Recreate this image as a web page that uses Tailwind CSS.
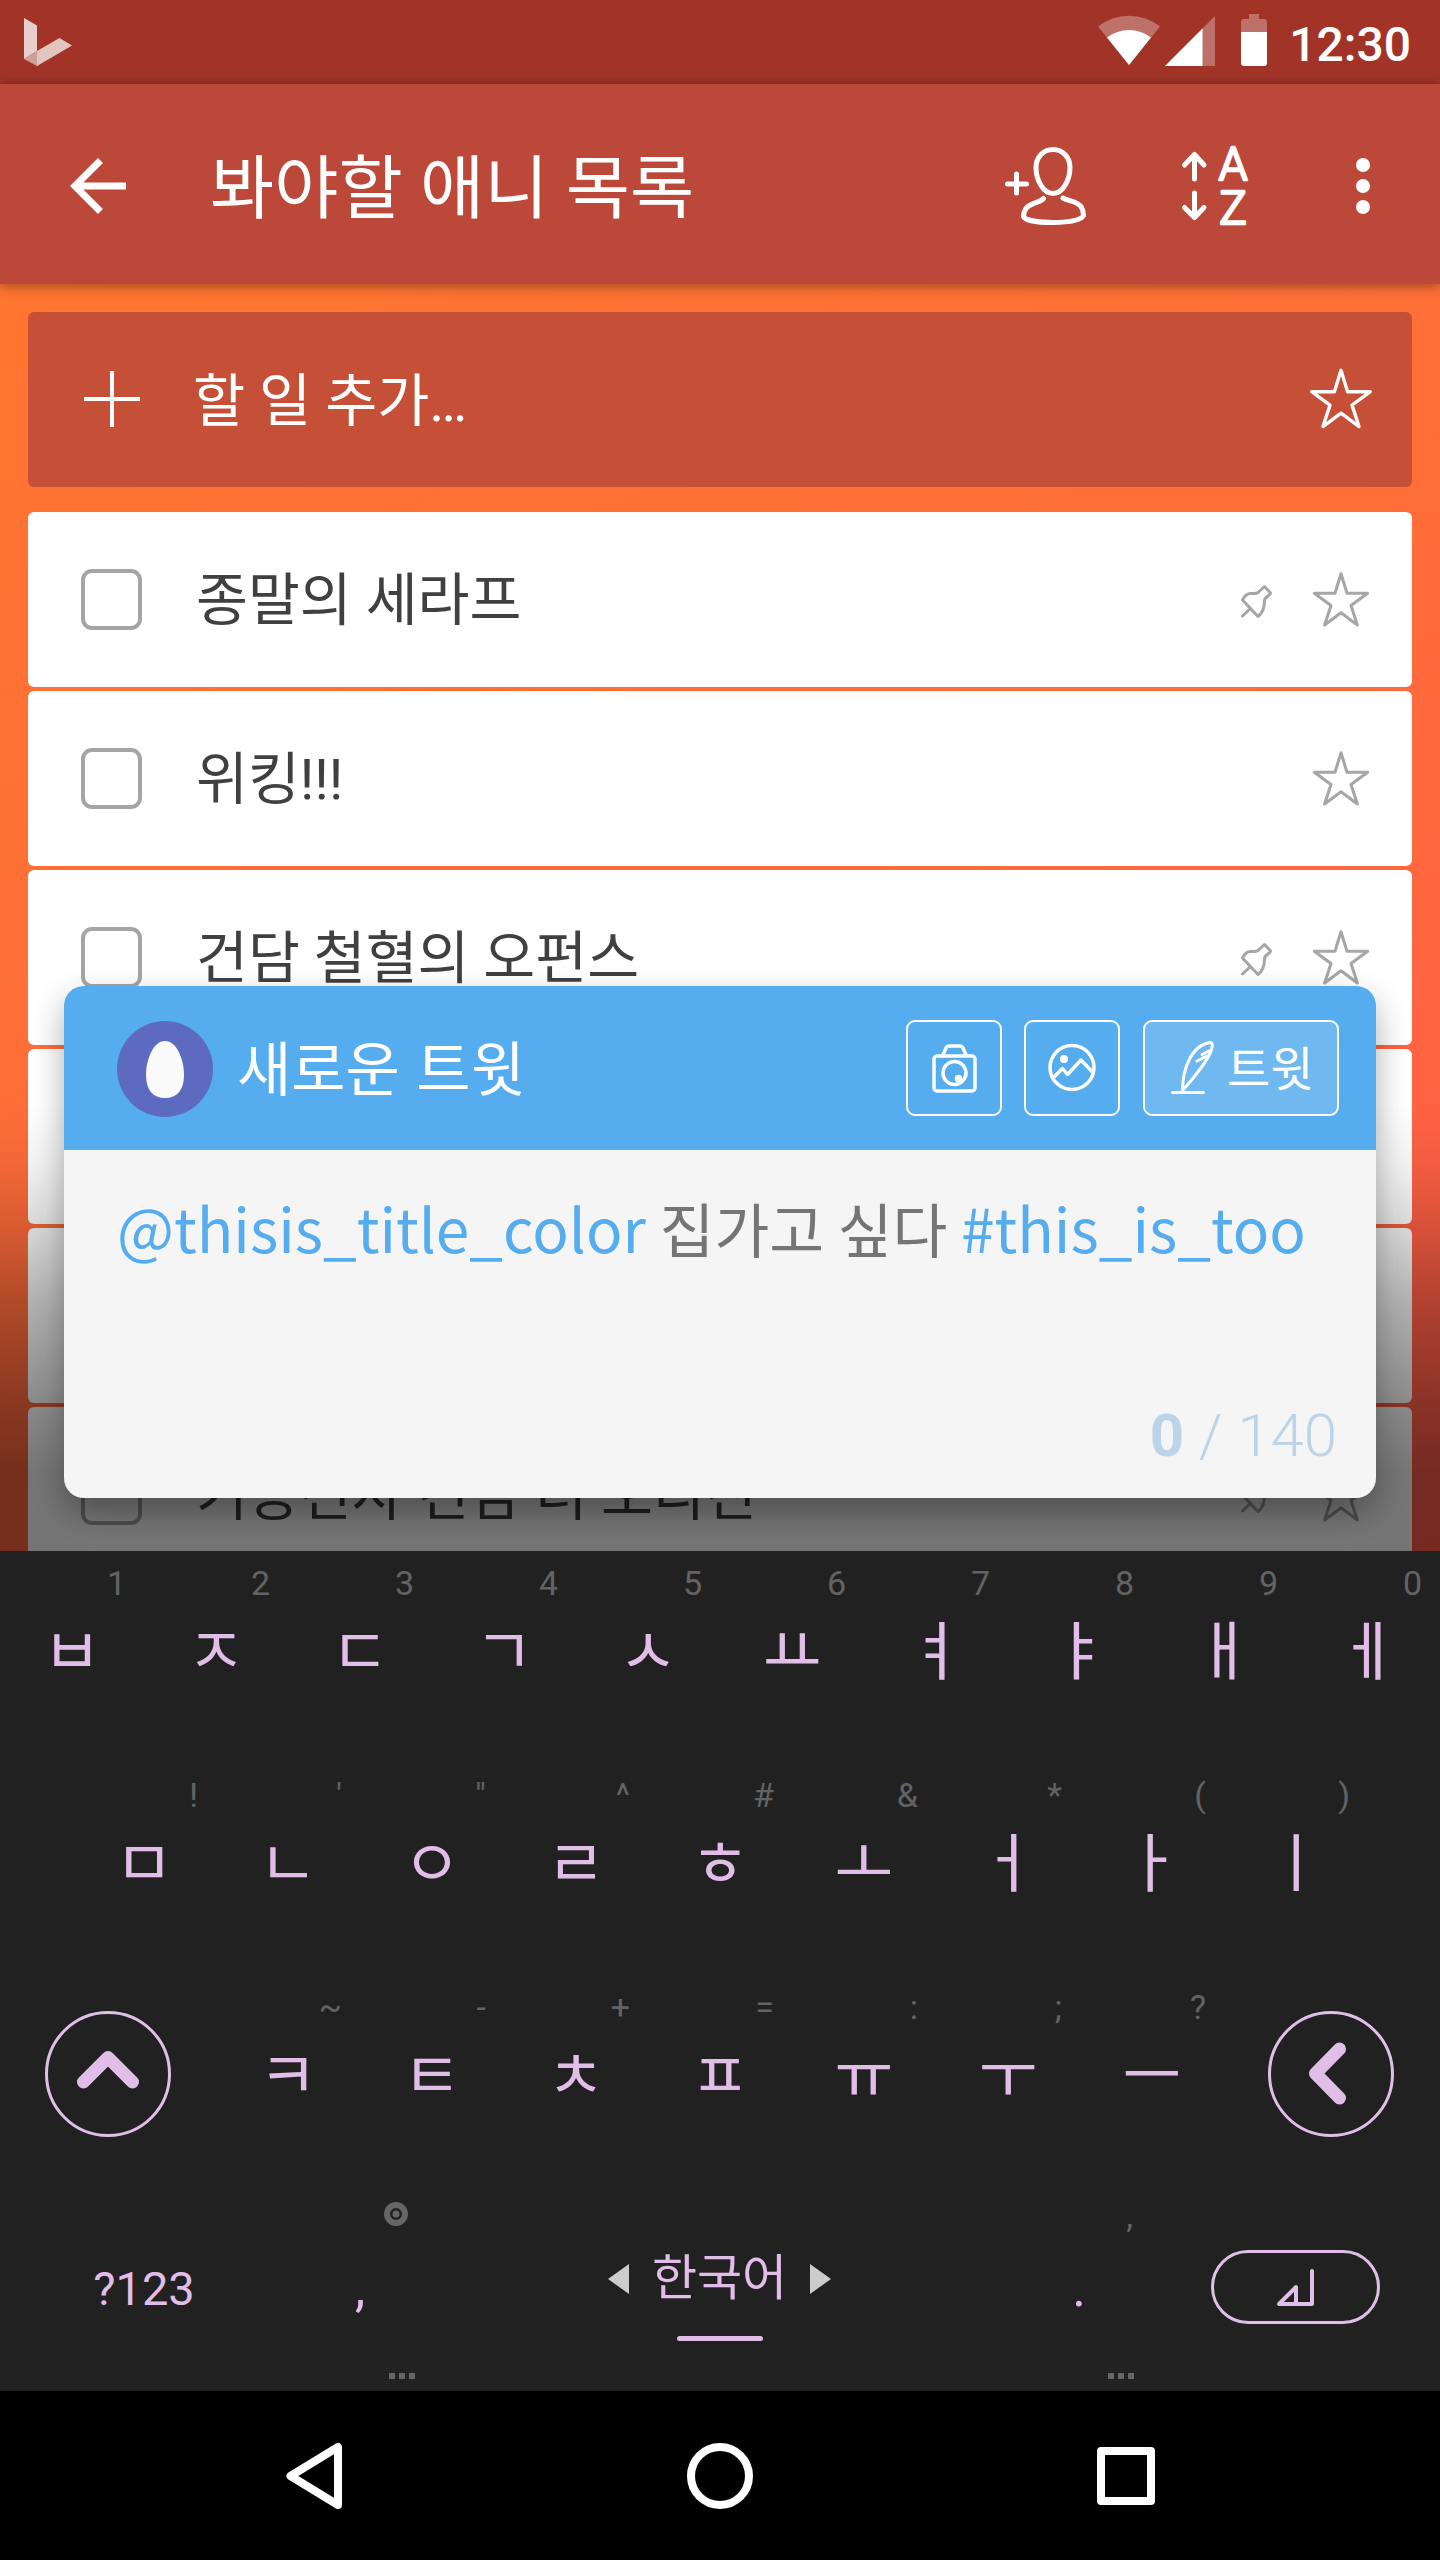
<!DOCTYPE html>
<html lang="ko">
<head>
<meta charset="utf-8">
<title>봐야할 애니 목록</title>
<script src="https://cdn.jsdelivr.net/npm/@tailwindcss/browser@4"></script>
</head>
<body class="bg-black">
<svg class="hidden">
  <symbol id="star" viewBox="0 0 84 84"><path d="M42 15.5l6.3 20.5h21.7l-17.5 12.8 6.7 20.5L42 56.5 24.8 69.3l6.7-20.5L14 36h21.7z" fill="none" stroke="currentColor" stroke-width="3.2" stroke-linejoin="round"/></symbol>
  <symbol id="pin" viewBox="0 0 34 34"><path d="M25.5 2.5l6 6.5c0 3-6 3-6 8 0 7-2 12-6.5 15.500L3.500 16c2-4 4-6.500 8-6.500 4.500 0 6.500.5 8-1.500zM11.500 24.500L3.500 32" fill="none" stroke="currentColor" stroke-width="3" stroke-linejoin="round" stroke-linecap="round"/></symbol>
</svg>
<div class="flex h-[2560px] w-[1440px] flex-col overflow-hidden font-['Roboto','Noto_Sans_CJK_KR',sans-serif]">

  <!-- status bar -->
  <header class="flex h-[84px] shrink-0 items-center justify-between bg-[#a13427] pl-6 pr-[29px]">
    <svg class="h-12 w-12" viewBox="24 18 48 48"><path d="M24 18l13 7.500V51l-13 8z" fill="#e9cfcc"/><path d="M59.500 38L72 45.500 37 66V51z" fill="#e3c5c0"/><path d="M24 59l13-8v15z" fill="#cf9f9a"/></svg>
    <div class="flex items-center">
      <svg class="h-[84px] w-[170px]" viewBox="1098 0 170 84" fill="#fff">
        <path d="M1129 65L1098 26.500a50 50 0 0 1 62 0z" opacity=".3"/><path d="M1129 65L1107 37.500a36 36 0 0 1 44 0z"/>
        <path d="M1215 16v50h-50z" opacity=".3"/><path d="M1202.500 28.500V66H1165z"/>
        <path d="M1249 14h10v5h5q3 0 3 3v10h-26V22q0-3 3-3h5z" opacity=".3"/><path d="M1241 32h26v31q0 3-3 3h-20q-3 0-3-3z"/>
      </svg>
      <span class="ml-[21px] mt-[6px] text-[48px] font-medium leading-none text-white">12:30</span>
    </div>
  </header>

  <!-- toolbar -->
  <nav class="relative z-10 flex h-[200px] shrink-0 items-center bg-[#bc4839] pl-14 pr-[56px] text-white shadow-[0_2px_12px_rgba(0,0,0,0.4)]">
    <svg class="mt-1 h-[84px] w-[84px]" viewBox="0 0 24 24" fill="currentColor"><path d="M20 11H7.830l5.590-5.590L12 4l-8 8 8 8 1.410-1.410L7.830 13H20v-2z"/></svg>
    <h1 class="ml-[70px] mt-[12px] flex-1 text-[69.800px] leading-none">봐야할 애니 목록</h1>
    <svg class="mt-1 h-[84px] w-[84px]" viewBox="1003 144 84 84" fill="none" stroke="currentColor" stroke-width="5" stroke-linecap="round" stroke-linejoin="round"><path d="M1007.500 184h19M1016.500 174v19M1053 149.500c10 0 17 8 17 18 0 12-7 26-17 26s-17-14-17-26c0-10 7-18 17-18zM1043.500 198.500c-4 4.500-13 4-17.500 10-2 3-2.500 7-2.500 8 1.500 4 16 6 29.500 6s28-2 30.500-7c0-3-.5-6-2.500-9-4-5.500-12-5-18-8.500"/></svg>
    <svg class="ml-[94px] mt-1 h-[84px] w-[72px] overflow-visible" viewBox="1181 144 72 84" fill="none" stroke="currentColor" stroke-width="5" stroke-linecap="round" stroke-linejoin="round"><path d="M1194.500 179v-23M1184.500 165l10-10.500 9.500 10.500M1194.500 193v24M1184.500 207.500l10 10 9.500-10"/><text x="1233" y="180" text-anchor="middle" font-size="46" font-weight="300" fill="currentColor" stroke-width="2.500">A</text><text x="1233" y="224" text-anchor="middle" font-size="46" font-weight="300" fill="currentColor" stroke-width="2.500">Z</text></svg>
    <svg class="ml-[89px] mt-1 h-[56px] w-[42px]" viewBox="0 0 42 56" fill="currentColor"><circle cx="21" cy="7" r="7"/><circle cx="21" cy="28" r="7"/><circle cx="21" cy="49" r="7"/></svg>
  </nav>

  <!-- task list -->
  <main class="relative h-[1267px] shrink-0 overflow-hidden bg-[linear-gradient(155deg,#ff7630_0%,#ff6d38_45%,#ff5a4a_100%)] px-7 pt-7">
    <div class="flex h-[175px] items-center rounded-md bg-[#c64f38] pl-14 pr-[27px] text-white">
      <svg class="-mt-px h-14 w-14" viewBox="0 0 56 56" stroke="currentColor" stroke-width="4"><path d="M0 28h56M28 0v56"/></svg>
      <p class="ml-[53px] mt-[6px] flex-1 text-[56.600px] leading-none">할 일 추가…</p>
      <svg class="-mt-[3px] h-[88px] w-[88px]"><use href="#star"/></svg>
    </div>
    <ul id="tasks" class="mt-[25px] flex flex-col gap-1"></ul>

    <div class="absolute inset-x-0 bottom-0 top-[820px] bg-[linear-gradient(to_bottom,transparent_0px,rgba(0,0,0,0.05)_60px,rgba(0,0,0,0.15)_120px,rgba(0,0,0,0.31)_200px,rgba(0,0,0,0.46)_300px,rgba(0,0,0,0.54)_370px)]"></div>

    <!-- compose dialog -->
    <section class="absolute left-16 top-[702px] flex h-[512px] w-[1312px] flex-col overflow-hidden rounded-[20px] bg-[#f5f5f5] shadow-[0_14px_32px_rgba(0,0,0,0.32)]">
      <div class="flex h-[164px] items-center bg-[#55acee] pl-[53px] pr-[37px] text-white">
        <svg class="mt-0.5 h-24 w-24" viewBox="0 0 96 96"><circle cx="48" cy="48" r="48" fill="#5c6bc0"/><path d="M48 20c12 0 19 19 19 34 0 15-7 23-19 23s-19-8-19-23c0-15 7-34 19-34z" fill="#fafafa"/></svg>
        <h2 class="-mt-[5px] ml-[24px] flex-1 font-['Noto_Sans_CJK_KR',sans-serif] text-[59px] leading-none">새로운 트윗</h2>
        <div class="flex gap-[22px]">
          <button class="flex h-24 w-24 items-center justify-center rounded-[9px] border-2 border-white"><svg class="h-[52px] w-[52px]" viewBox="928 1042 52 52" fill="none" stroke="currentColor" stroke-width="3.500" stroke-linejoin="round"><rect x="934" y="1056" width="41" height="35" rx="3"/><path d="M943 1055l3-7q1-2 3-2h11q2 0 3 2l3 7"/><circle cx="954.500" cy="1073" r="11.500"/><circle cx="958.500" cy="1078.500" r="2" fill="currentColor"/></svg></button>
          <button class="mr-px flex h-24 w-24 items-center justify-center rounded-[9px] border-2 border-white"><svg class="h-[52px] w-[52px]" viewBox="1046 1042 52 52" fill="none" stroke="currentColor" stroke-width="3.500" stroke-linejoin="round"><circle cx="1072" cy="1067.500" r="22"/><circle cx="1064" cy="1059" r="4" fill="currentColor" stroke="none"/><path d="M1053 1078l9.500-9.500 5 6 13.500-14.500 12 12.500"/></svg></button>
          <button class="flex h-24 w-[196px] items-center rounded-[9px] border-2 border-white bg-white/16 pl-6"><svg class="h-[56px] w-[46px]" viewBox="1168 1040 46 56" fill="none" stroke="currentColor" stroke-width="3" stroke-linecap="round" stroke-linejoin="round"><path d="M1171.500 1092.500h31M1181.500 1090.500c0-20 8-45 27.500-48 3.500-.5 2.500 6 0 11-5 10-15 23-27.500 37zM1208 1051l-7 3.500M1206 1056l-10 5"/></svg><span class="-mt-[5px] ml-[12px] font-['Noto_Sans_CJK_KR',sans-serif] text-[47px] leading-none">트윗</span></button>
        </div>
      </div>
      <p class="mt-[32px] whitespace-nowrap pl-[53px] font-['Noto_Sans_CJK_KR',sans-serif] text-[59.600px] leading-[90px] text-[#757575] [word-spacing:-3px]"><span class="text-[60.300px] text-[#55acee]">@thisis_title_color</span> 집가고 싶다 <span class="text-[60.300px] text-[#55acee]">#this_is_too</span></p>
      <p class="mb-[26px] mr-[39px] mt-auto text-right text-[60px] font-light leading-[72px] text-[#bcd4e8]"><b class="font-bold">0</b> / 140</p>
    </section>
  </main>

  <!-- keyboard -->
  <section class="h-[840px] shrink-0 bg-[#212121] text-[#e1bee7]">
    <div id="row1" class="flex h-[212px]"></div>
    <div id="row2" class="flex h-[212px] px-[72px]"></div>
    <div class="flex h-[212px]">
      <div class="flex w-[216px] justify-center pr-px pt-[35px]"><svg class="h-32 w-32" viewBox="0 0 128 128" fill="none" stroke="currentColor"><circle cx="64" cy="64" r="61.500" stroke-width="3"/><path d="M39.500 72L64 47.500 88.500 72" stroke-width="13" stroke-linecap="round" stroke-linejoin="round"/></svg></div>
      <div id="row3" class="flex"></div>
      <div class="flex w-[216px] justify-center pr-[3px] pt-[35px]"><svg class="h-32 w-32" viewBox="0 0 128 128" fill="none" stroke="currentColor"><circle cx="64" cy="64" r="61.500" stroke-width="3"/><path d="M72.500 39L48.500 63.500l24 24.500" stroke-width="13" stroke-linecap="round" stroke-linejoin="round"/></svg></div>
    </div>
    <div class="flex h-[204px]">
      <div class="flex w-[288px] justify-center pt-[74px] text-[47px] leading-[56px]">?123</div>
      <div class="relative flex w-36 justify-center pt-[74px] text-[52px] leading-[56px]">,
        <svg class="absolute left-[94px] top-[13px] h-7 w-7 text-[#666]" viewBox="0 0 28 28"><circle cx="14" cy="14" r="9" fill="none" stroke="currentColor" stroke-width="6"/><circle cx="14" cy="14" r="3.500" fill="currentColor"/></svg>
        <span class="absolute left-[101px] top-[186px] flex gap-1"><i class="size-1.5 bg-[#666]"></i><i class="size-1.5 bg-[#666]"></i><i class="size-1.5 bg-[#666]"></i></span>
      </div>
      <div class="flex w-[575px] flex-col items-center pt-[62px]">
        <div class="flex items-center">
          <svg class="h-[30px] w-[21px]" viewBox="0 0 21 30"><path d="M21 0v30L0 15z" fill="#ccc"/></svg>
          <span class="mx-[23px] text-[49px] leading-[60px]">한국어</span>
          <svg class="h-[30px] w-[21px]" viewBox="0 0 21 30"><path d="M0 0v30l21-15z" fill="#ccc"/></svg>
        </div>
        <span class="mt-[27px] h-[5px] w-[86px] rounded-full bg-[#e1bee7]"></span>
      </div>
      <div class="relative flex w-36 justify-center pt-[74px] text-[52px] leading-[56px]">.
        <span class="absolute right-[18px] top-[9px] text-[34px] leading-10 text-[#666]">,</span>
        <span class="absolute left-[101px] top-[186px] flex gap-1"><i class="size-1.5 bg-[#666]"></i><i class="size-1.5 bg-[#666]"></i><i class="size-1.5 bg-[#666]"></i></span>
      </div>
      <div class="flex w-[288px] justify-center pt-[63px]"><div class="h-[74px] w-[169px] rounded-full border-3 border-[#e1bee7]"><svg class="h-[68px] w-[163px]" viewBox="1214 2253 163 68" fill="none" stroke="currentColor" stroke-width="4" stroke-linejoin="round" stroke-linecap="round"><path d="M1312 2271v33h-33l17-17v17"/></svg></div></div>
    </div>
  </section>

  <!-- navigation bar -->
  <footer class="flex h-[169px] shrink-0 items-center justify-center gap-[316px] bg-black text-white">
    <svg class="h-[90px] w-[90px]" viewBox="270 2431 90 90" fill="none" stroke="currentColor" stroke-width="8" stroke-linejoin="round"><path d="M291.500 2476l47.500-29v58z"/></svg>
    <svg class="h-[90px] w-[90px]" viewBox="0 0 90 90" fill="none" stroke="currentColor" stroke-width="8"><circle cx="45" cy="45" r="29"/></svg>
    <svg class="h-[90px] w-[90px]" viewBox="0 0 90 90" fill="none" stroke="currentColor" stroke-width="8" stroke-linejoin="round"><rect x="20" y="20" width="50" height="50"/></svg>
  </footer>
</div>

<script>
const tasks = [['종말의 세라프', 1], ['위킹!!!', 0], ['건담 철혈의 오펀스', 1], ['', 0], ['', 0], ['기동전사 건담 더 오리진', 1]];
document.getElementById('tasks').innerHTML = tasks.map(([title, pinned]) => `
  <li class="flex h-[175px] items-center rounded-md bg-white pl-[53px] pr-[31px] text-[#404040]">
    <span class="size-[61px] rounded-[11px] border-4 border-[#a5a5a5]"></span>
    <span class="ml-[54px] mt-[4px] flex-1 text-[56.400px] leading-none">${title}</span>
    ${pinned ? '<svg class="mr-[28px] mt-[3px] h-[34px] w-[34px] text-[#a6a6a6]"><use href="#pin"/></svg>' : ''}
    <svg class="-mt-px h-[80px] w-[80px] text-[#a6a6a6]"><use href="#star"/></svg>
  </li>`).join('');

const key = ([letter, hint]) => `
  <div class="relative flex w-36 justify-center pt-[62px]">
    <span class="absolute right-[18px] top-[12px] text-[34px] leading-10 text-[#636363]">${hint}</span>
    <span class="text-[64px] leading-[80px]">${letter}</span>
  </div>`;
const fill = (id, letters, hints) => {
  document.getElementById(id).innerHTML = [...letters].map((l, i) => key([l, hints[i]])).join('');
};
fill('row1', 'ㅂㅈㄷㄱㅅㅛㅕㅑㅐㅔ', [...'1234567890']);
fill('row2', 'ㅁㄴㅇㄹㅎㅗㅓㅏㅣ', ['!', "'", '"', '^', '#', '&amp;', '*', '(', ')']);
fill('row3', 'ㅋㅌㅊㅍㅠㅜㅡ', [...'~-+=:;?']);
</script>
</body>
</html>
